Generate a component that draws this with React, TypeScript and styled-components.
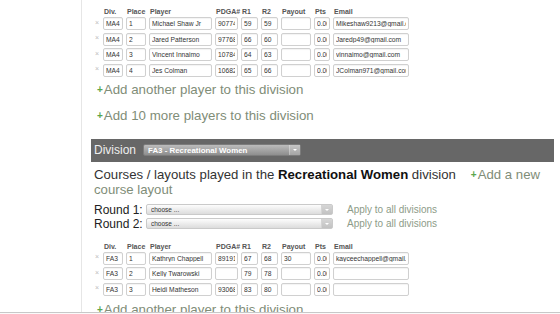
import * as React from 'react';
import styled, { createGlobalStyle } from 'styled-components';

type Player = {
    div: string,
    place: string,
    name: string,
    pdga: string,
    r1: string,
    r2: string,
    payout: string,
    pts: string,
    email: string
}

const menOpen: Player[] = [
    { div: 'MA4', place: '1', name: 'Michael Shaw Jr', pdga: '90774', r1: '59', r2: '59', payout: '', pts: '0.00', email: 'Mikeshaw9213@gmail.com' },
    { div: 'MA4', place: '2', name: 'Jared Patterson', pdga: '97768', r1: '66', r2: '60', payout: '', pts: '0.00', email: 'Jaredp49@gmail.com' },
    { div: 'MA4', place: '3', name: 'Vincent Innaimo', pdga: '107843', r1: '64', r2: '63', payout: '', pts: '0.00', email: 'vinnaimo@gmail.com' },
    { div: 'MA4', place: '4', name: 'Jes Colman', pdga: '106823', r1: '65', r2: '66', payout: '', pts: '0.00', email: 'JColman971@gmail.com' },
]

const recWomen: Player[] = [
    { div: 'FA3', place: '1', name: 'Kathryn Chappell', pdga: '89191', r1: '67', r2: '68', payout: '30', pts: '0.00', email: 'kayceechappell@gmail.com' },
    { div: 'FA3', place: '2', name: 'Kelly Twarowski', pdga: '', r1: '79', r2: '78', payout: '', pts: '0.00', email: '' },
    { div: 'FA3', place: '3', name: 'Heidi Matheson', pdga: '93068', r1: '83', r2: '80', payout: '', pts: '0.00', email: '' },
]

const COLUMNS = '5px 20px 20px 63px 23px 17px 17px 30px 16px 76px';
const LINK = '#7f8d78';

const GlobalStyle = createGlobalStyle`
    html, body {
        margin: 0;
        padding: 0;
        background: #fff;
    }
    body {
        font-family: "Liberation Sans", Arial, sans-serif;
        overflow: hidden;
    }
`

const Page = styled.div`
    position: relative;
    display: flex;
    width: 560px;
    height: 314px;
    overflow: hidden;
`

const Sidebar = styled.div`
    width: 81px;
    flex-shrink: 0;
    border-right: 1px solid #e6e6e6;
`

const Main = styled.div`
    flex: 1;
    min-width: 0;
    padding: 8px 6px 0 9px;
`

const PlayerTable = styled.div`
    margin-left: 4px;
    margin-top: ${(props: { top?: number }) => props.top || 0}px;
`

const HeadRow = styled.div`
    display: grid;
    grid-template-columns: ${COLUMNS};
    column-gap: 3px;
    height: 8px;
    line-height: 8px;
    margin-bottom: 1px;
    font-size: 7px;
    font-weight: bold;
    color: #555;
`

const HeadCell = styled.div`
    padding-left: 1px;
    white-space: nowrap;
`

const Rows = styled.div`
    display: flex;
    flex-direction: column;
    gap: 2.6px;
`

const Row = styled.div`
    display: grid;
    grid-template-columns: ${COLUMNS};
    column-gap: 3px;
    height: 13px;
    align-items: center;
`

const Remove = styled.span`
    font-size: 7px;
    line-height: 7px;
    color: #bdbdbd;
    margin-top: -3px;
`

const Field = styled.input`
    box-sizing: border-box;
    width: 100%;
    min-width: 0;
    height: 13px;
    margin: 0;
    padding: 0 2px;
    border: 1px solid #d0d0d0;
    border-radius: 2px;
    background: #fff;
    box-shadow: inset 0 1px 1px rgba(0, 0, 0, 0.05);
    font-family: inherit;
    font-size: 6.7px;
    color: #333;
    outline: none;
`

const AddLink = styled.div`
    margin-top: ${(props: { top: number }) => props.top}px;
    padding-left: 6px;
    font-size: 13.3px;
    line-height: 18px;
    color: ${LINK};
    white-space: nowrap;
`

const Plus = styled.span`
    color: #5aa64c;
    font-weight: bold;
    font-size: 10px;
    margin-right: 1px;
    position: relative;
    top: -1px;
`

const DivisionBar = styled.div`
    display: flex;
    align-items: center;
    gap: 7px;
    height: 23px;
    margin-top: 13px;
    padding-left: 3px;
    background: #676767;
`

const DivisionLabel = styled.span`
    font-size: 12px;
    color: #eee;
`

const DivisionSelect = styled.div`
    display: flex;
    align-items: center;
    box-sizing: border-box;
    width: 158px;
    height: 12px;
    padding-left: 4px;
    border: 1px solid #7c7c7c;
    border-radius: 2px;
    background: linear-gradient(#bcbcbc, #8e8e8e);
    font-size: 7.9px;
    font-weight: bold;
    color: #fff;
    white-space: nowrap;
`

const SelectText = styled.span`
    flex: 1;
    overflow: hidden;
`

const Arrow = styled.span`
    display: flex;
    align-items: center;
    justify-content: center;
    width: 10px;
    height: 100%;
    border-left: 1px solid ${(props: { light?: boolean }) => props.light ? '#d4d4d4' : 'rgba(255, 255, 255, 0.25)'};
    background: ${(props: { light?: boolean }) => props.light ? 'linear-gradient(#d6d6d6, #c2c2c2)' : 'linear-gradient(#c6c6c6, #a4a4a4)'};
    &::after {
        content: '';
        border-left: 2px solid transparent;
        border-right: 2px solid transparent;
        border-top: 2.5px solid #fff;
    }
`

const Courses = styled.div`
    margin-top: 6px;
    padding-left: 3px;
    font-size: 13.2px;
    line-height: 14px;
    color: #333;
`

const Strong = styled.b`
    color: #111;
`

const AddNew = styled.span`
    margin-left: 15px;
    color: ${LINK};
`

const Rounds = styled.div`
    margin-top: 6px;
    padding-left: 3px;
`

const RoundRow = styled.div`
    display: flex;
    align-items: center;
    height: 14px;
`

const RoundLabel = styled.span`
    width: 52px;
    font-size: 12px;
    color: #222;
    white-space: nowrap;
`

const RoundSelect = styled.div`
    display: flex;
    align-items: center;
    box-sizing: border-box;
    width: 187px;
    height: 11px;
    padding-left: 4px;
    border: 1px solid #cacaca;
    border-radius: 2px;
    background: linear-gradient(#fdfdfd, #dcdcdc);
    font-size: 6.5px;
    color: #333;
`

const Apply = styled.span`
    margin-left: 14px;
    font-size: 10px;
    color: #8d9b88;
    white-space: nowrap;
`

const Footer = styled.div`
    position: absolute;
    left: 0;
    right: 0;
    bottom: 0;
    height: 1px;
    border-top: 1px solid #c8c8c8;
    background: #fafafa;
`

const headers = ['', 'Div.', 'Place', 'Player', 'PDGA#', 'R1', 'R2', 'Payout', 'Pts', 'Email'];

const Players = ({ players, top }: { players: Player[], top?: number }) => (
    <PlayerTable top={top}>
        <HeadRow>
            {headers.map((h, i) => <HeadCell key={i}>{h}</HeadCell>)}
        </HeadRow>
        <Rows>
            {players.map((p, i) => (
                <Row key={i}>
                    <Remove>×</Remove>
                    <Field defaultValue={p.div} />
                    <Field defaultValue={p.place} />
                    <Field defaultValue={p.name} />
                    <Field defaultValue={p.pdga} />
                    <Field defaultValue={p.r1} />
                    <Field defaultValue={p.r2} />
                    <Field defaultValue={p.payout} />
                    <Field defaultValue={p.pts} />
                    <Field defaultValue={p.email} />
                </Row>
            ))}
        </Rows>
    </PlayerTable>
)

export default function App() {
    return (
        <Page>
            <GlobalStyle />
            <Sidebar />
            <Main>
                <Players players={menOpen} />
                <AddLink top={4}><Plus>+</Plus>Add another player to this division</AddLink>
                <AddLink top={7}><Plus>+</Plus>Add 10 more players to this division</AddLink>

                <DivisionBar>
                    <DivisionLabel>Division</DivisionLabel>
                    <DivisionSelect>
                        <SelectText>FA3 - Recreational Women</SelectText>
                        <Arrow />
                    </DivisionSelect>
                </DivisionBar>

                <Courses>
                    Courses / layouts played in the <Strong>Recreational Women</Strong> division
                    <AddNew><Plus>+</Plus>Add a new course layout</AddNew>
                </Courses>

                <Rounds>
                    {['Round 1:', 'Round 2:'].map(r => (
                        <RoundRow key={r}>
                            <RoundLabel>{r}</RoundLabel>
                            <RoundSelect>
                                <SelectText>choose ...</SelectText>
                                <Arrow light />
                            </RoundSelect>
                            <Apply>Apply to all divisions</Apply>
                        </RoundRow>
                    ))}
                </Rounds>

                <Players players={recWomen} top={12} />
                <AddLink top={5}><Plus>+</Plus>Add another player to this division</AddLink>
            </Main>
            <Footer />
        </Page>
    );
}
